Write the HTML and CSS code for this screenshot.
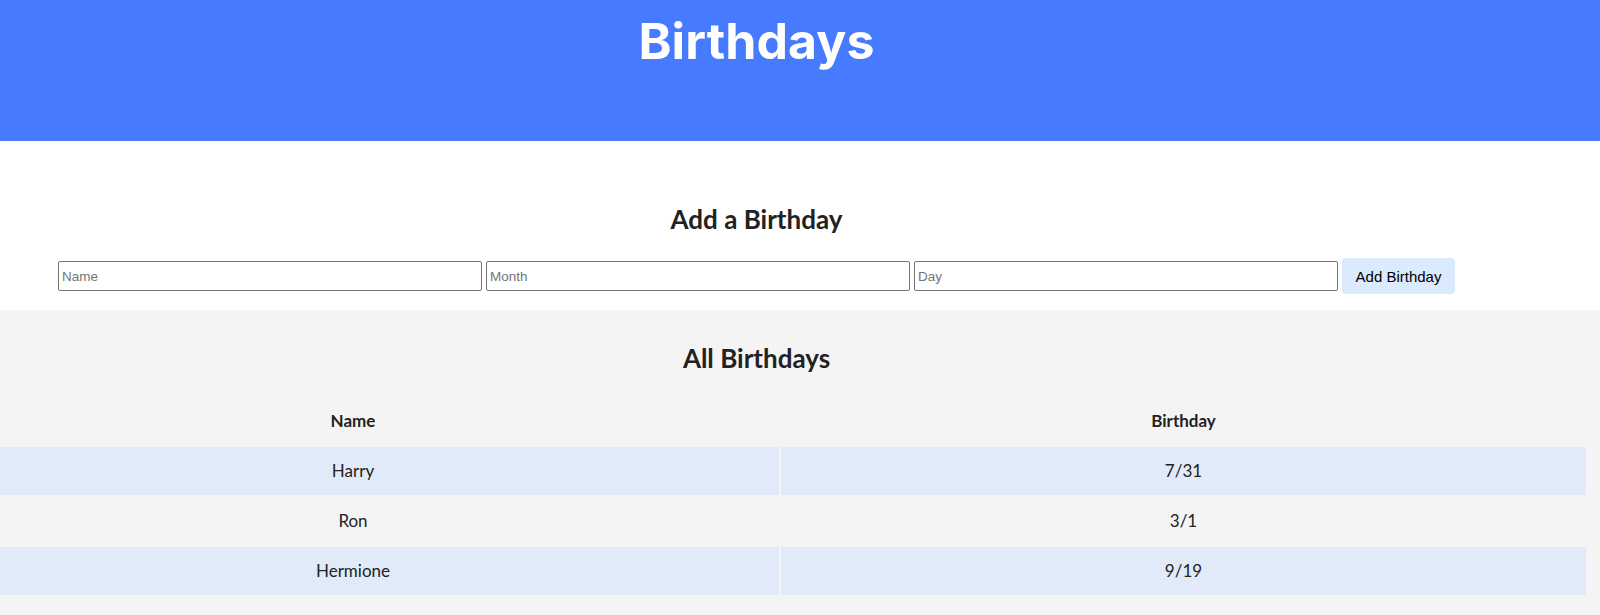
FILE: index.html
```html
<!DOCTYPE html>
<html lang="en">
<head>
<meta charset="utf-8">
<title>Birthdays</title>
<link rel="stylesheet" href="styles.css">
</head>
<body>
<header class="top">
  <div class="wrap">
    <h1 class="title">Birthdays</h1>
  </div>
</header>
<section class="add">
  <div class="wrap">
    <h2 class="heading">Add a Birthday</h2>
    <form class="form">
      <input class="field" type="text" name="name" placeholder="Name">
      <input class="field" type="text" name="month" placeholder="Month">
      <input class="field" type="text" name="day" placeholder="Day">
      <button class="btn" type="button">Add Birthday</button>
    </form>
  </div>
</section>
<section class="list">
  <div class="wrap">
    <h2 class="heading heading-list">All Birthdays</h2>
    <table class="table">
      <colgroup>
        <col class="col-name">
        <col class="col-date">
      </colgroup>
      <thead>
        <tr><th>Name</th><th>Birthday</th></tr>
      </thead>
      <tbody>
        <tr class="alt"><td>Harry</td><td>7/31</td></tr>
        <tr><td>Ron</td><td>3/1</td></tr>
        <tr class="alt"><td>Hermione</td><td>9/19</td></tr>
      </tbody>
    </table>
  </div>
</section>
</body>
</html>
```

FILE: styles.css
```css
html, body {
  margin: 0;
  padding: 0;
  background: #f4f4f4;
}

body {
  font-family: Lato, "Noto Sans", sans-serif;
  color: #222;
  overflow-x: hidden;
}

.wrap {
  width: 1513px;
  text-align: center;
}

.top {
  background: #477bff;
  height: 141px;
}

.title {
  margin: 0;
  padding-top: 16px;
  font-family: Inter, "Noto Sans", sans-serif;
  font-weight: 700;
  font-size: 50px;
  line-height: 50px;
  color: #fff;
  letter-spacing: 0.1px;
}

.add {
  background: #fff;
  padding: 63px 0 16px;
}

.heading {
  margin: 0;
  font-size: 26px;
  line-height: 30px;
  font-weight: 700;
  color: #222;
}

.form {
  margin-top: 24px;
  display: flex;
  justify-content: center;
  align-items: center;
  gap: 4px;
}

.field {
  box-sizing: border-box;
  width: 424px;
  height: 30px;
  margin: 0;
  padding: 1px 3px;
  border: 1px solid #767676;
  border-radius: 2px;
  font-family: "Liberation Sans", Arial, sans-serif;
  font-size: 13.5px;
  background: #fff;
}

.field::placeholder {
  color: #757575;
}

.btn {
  box-sizing: border-box;
  width: 113px;
  height: 36px;
  margin: 0;
  padding: 0 12px;
  border: none;
  border-radius: 4px;
  background: #dbeafe;
  font-family: "Liberation Sans", Arial, sans-serif;
  font-size: 15px;
  color: #000;
}

.list {
  padding-top: 33px;
  height: 273px;
}

.table {
  margin-top: 22px;
  margin-left: -75px;
  width: 1663px;
  table-layout: fixed;
  border-collapse: separate;
  border-spacing: 2px;
  font-size: 17px;
}

.col-name {
  width: 852px;
}

.col-date {
  width: 805px;
}

.table th,
.table td {
  padding: 12px 0;
  line-height: 24px;
  text-align: center;
}

.table th {
  font-weight: 700;
}

.table .alt td {
  background: #e1eaf8;
}
```
